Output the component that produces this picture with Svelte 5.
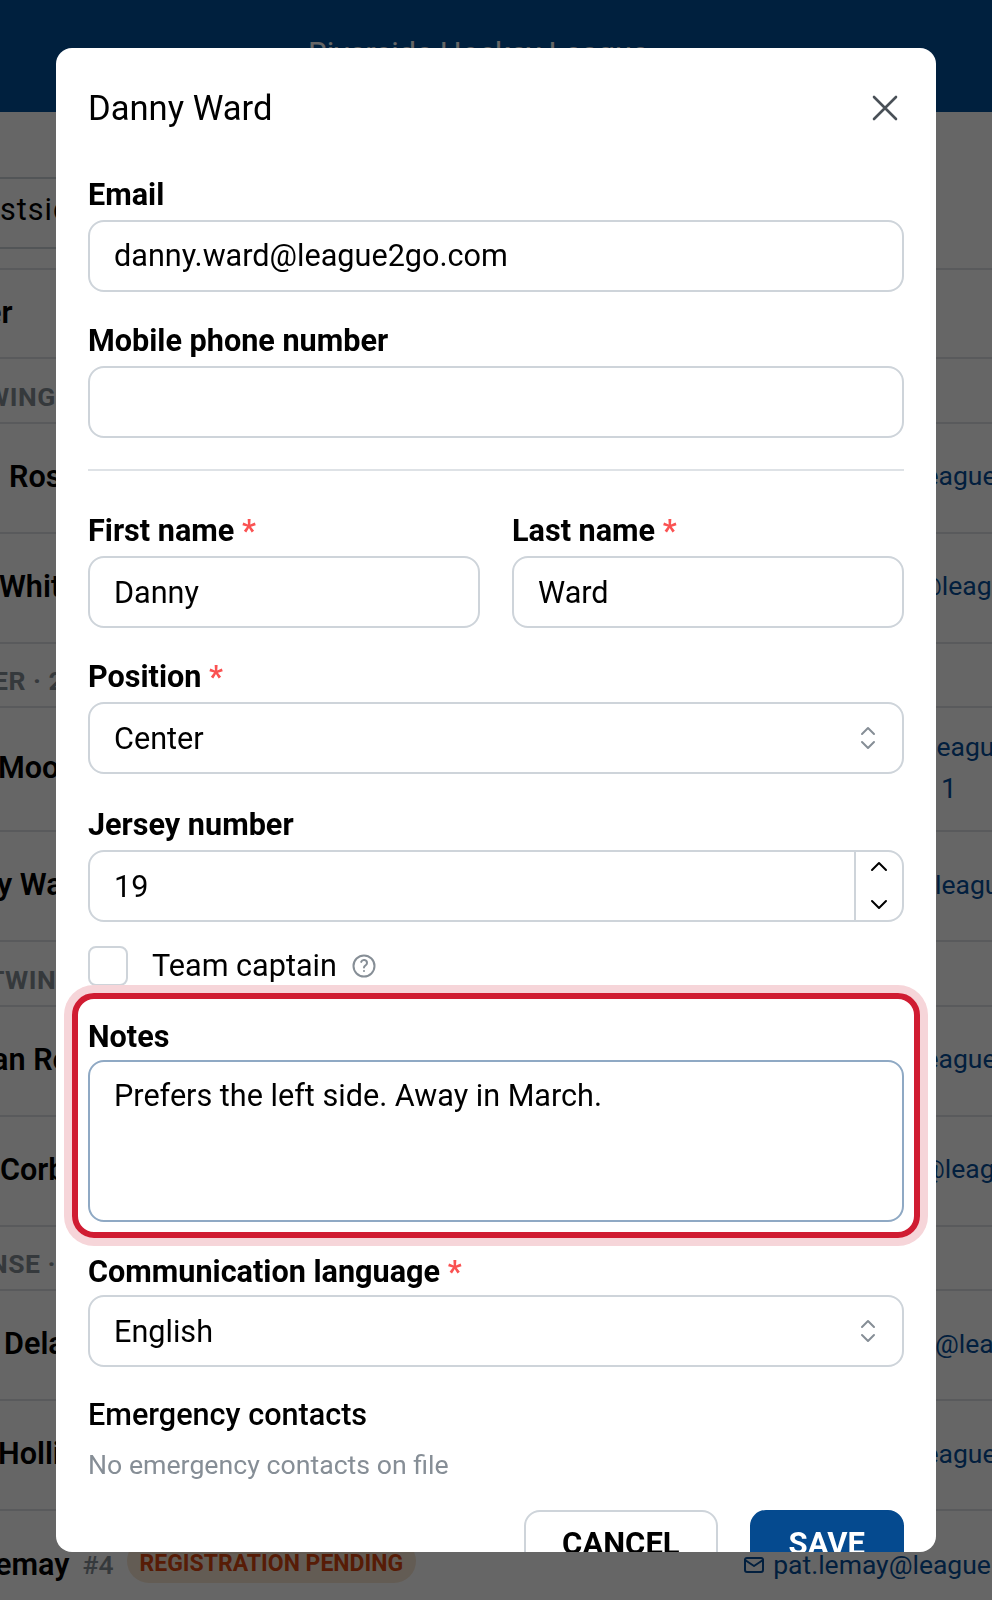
<script>
	let players = [
		{ type: 'row', name: 'er', nx: -15, h: 'short' },
		{ type: 'section', label: 'WINGS', nx: -14 },
		{ type: 'row', name: 'Ross', nx: 9, mail: 'league2go.com', mx: -18 },
		{ type: 'row', name: 'White', nx: -1, mail: '@league2go.com', mx: -18 },
		{ type: 'section', label: 'ER · 2', nx: -7 },
		{ type: 'row', name: 'Moore', nx: -2, mail: 'league2go.com', mx: -6, extra: '1', h: 'tall' },
		{ type: 'row', name: 'y Ward', nx: -3, mail: 'league2go.com', mx: -1 },
		{ type: 'section', label: 'TWINS', nx: -12 },
		{ type: 'row', name: 'an Reid', nx: -8, mail: 'league2go.com', mx: -18 },
		{ type: 'row', name: 'Corbin', nx: 0, mail: '@league2go.com', mx: -15 },
		{ type: 'section', label: 'NSE ·', nx: -11 },
		{ type: 'row', name: 'Delaney', nx: 4, mail: '@league2go.com', mx: -1 },
		{ type: 'row', name: 'Hollis', nx: -2, mail: 'league2go.com', mx: -18 }
	];

	let form = {
		email: 'danny.ward@league2go.com',
		phone: '',
		first: 'Danny',
		last: 'Ward',
		position: 'Center',
		jersey: '19',
		captain: false,
		notes: 'Prefers the left side. Away in March.',
		language: 'English'
	};
</script>

<div class="page">
	<header class="topbar"><span>Riverside Hockey League</span></header>

	<div class="filter"><span>Eastside</span></div>

	<ul class="roster">
		{#each players as p}
			{#if p.type === 'section'}
				<li class="section"><span style="margin-left:{p.nx}px">{p.label}</span></li>
			{:else}
				<li class="player" class:short={p.h === 'short'} class:tall={p.h === 'tall'}>
					<span class="name" style="margin-left:{p.nx}px">{p.name}</span>
					{#if p.mail}
						<div class="contact" style="margin-right:{-p.mx}px">
							<span>{p.mail}</span>
							{#if p.extra}<span class="extra">{p.extra}</span>{/if}
						</div>
					{/if}
				</li>
			{/if}
		{/each}
		<li class="player last">
			<span class="name">emay</span>
			<span class="num">#4</span>
			<span class="badge">REGISTRATION PENDING</span>
			<span class="mail">
				<svg width="24" height="24" viewBox="0 0 24 24" fill="none" stroke="currentColor" stroke-width="2" stroke-linecap="round" stroke-linejoin="round">
					<rect x="3" y="5" width="18" height="14" rx="2" />
					<path d="M3 7l9 6 9-6" />
				</svg>
				pat.lemay@league2go.com
			</span>
		</li>
	</ul>
</div>

<div class="overlay"></div>

<div class="modal">
	<div class="modal-head">
		<h2>Danny Ward</h2>
		<button class="close" aria-label="Close">
			<svg width="26" height="26" viewBox="0 0 26 26" fill="none" stroke="currentColor" stroke-width="2.6" stroke-linecap="round">
				<path d="M2 2l22 22M24 2L2 24" />
			</svg>
		</button>
	</div>

	<div class="field">
		<label for="email">Email</label>
		<input id="email" class="control" value={form.email} />
	</div>

	<div class="field">
		<label for="phone">Mobile phone number</label>
		<input id="phone" class="control" value={form.phone} />
	</div>

	<hr />

	<div class="two">
		<div class="field">
			<label for="first">First name <i>*</i></label>
			<input id="first" class="control" value={form.first} />
		</div>
		<div class="field">
			<label for="last">Last name <i>*</i></label>
			<input id="last" class="control" value={form.last} />
		</div>
	</div>

	<div class="field">
		<label for="pos">Position <i>*</i></label>
		<div class="wrap">
			<select id="pos" class="control">
				<option>{form.position}</option>
			</select>
			<svg class="updown" width="16" height="24" viewBox="0 0 16 24" fill="none" stroke="currentColor" stroke-width="2" stroke-linecap="round" stroke-linejoin="round">
				<path d="M2 8l6-6 6 6M2 16l6 6 6-6" />
			</svg>
		</div>
	</div>

	<div class="field jersey">
		<label for="jersey">Jersey number</label>
		<div class="wrap">
			<input id="jersey" class="control" value={form.jersey} />
			<div class="steppers">
				<button class="up" aria-label="Up">
					<svg width="20" height="12" viewBox="0 0 20 12" fill="none" stroke="currentColor" stroke-width="2" stroke-linecap="round" stroke-linejoin="round"><path d="M3 10l7-7 7 7" /></svg>
				</button>
				<button class="down" aria-label="Down">
					<svg width="20" height="12" viewBox="0 0 20 12" fill="none" stroke="currentColor" stroke-width="2" stroke-linecap="round" stroke-linejoin="round"><path d="M3 2l7 7 7-7" /></svg>
				</button>
			</div>
		</div>
	</div>

	<div class="check">
		<input id="captain" type="checkbox" bind:checked={form.captain} />
		<label for="captain">Team captain</label>
		<svg width="24" height="24" viewBox="0 0 24 24" fill="none" stroke="#868e96" stroke-width="2" stroke-linecap="round" stroke-linejoin="round">
			<circle cx="12" cy="12" r="10.5" />
			<path d="M12 17v.01M12 13.5c0-2 3-2 3-4.6a3 3 0 0 0-5.8-1" />
		</svg>
	</div>

	<div class="field notes">
		<label for="notes">Notes</label>
		<textarea id="notes" class="control" value={form.notes}></textarea>
	</div>

	<div class="field lang">
		<label for="lang">Communication language <i>*</i></label>
		<div class="wrap">
			<select id="lang" class="control">
				<option>{form.language}</option>
			</select>
			<svg class="updown" width="16" height="24" viewBox="0 0 16 24" fill="none" stroke="currentColor" stroke-width="2" stroke-linecap="round" stroke-linejoin="round">
				<path d="M2 8l6-6 6 6M2 16l6 6 6-6" />
			</svg>
		</div>
	</div>

	<h3>Emergency contacts</h3>
	<p class="empty">No emergency contacts on file</p>

	<div class="actions">
		<button class="btn cancel">CANCEL</button>
		<button class="btn save">SAVE</button>
	</div>
</div>

<style>
	:global(body) {
		font-family: Roboto, sans-serif;
		background: #fff;
		color: #000;
	}
	.page {
		height: 1600px;
		overflow: hidden;
		font-size: 30.6px;
	}
	.topbar {
		height: 112px;
		background: #02509b;
		color: #fff;
		display: flex;
		justify-content: center;
		padding: 36px 36px 0 0;
		box-sizing: border-box;
		font-size: 30.6px;
	}
	.filter {
		margin-top: 65px;
		height: 72px;
		box-sizing: border-box;
		border-top: 2px solid #ced4da;
		border-bottom: 2px solid #ced4da;
		width: 300px;
		display: flex;
		align-items: center;
		margin-left: -36px;
		padding-bottom: 8px;
		letter-spacing: 1px;
	}
	.roster {
		list-style: none;
		margin: 19px 0 0;
		padding: 0;
	}
	.roster li {
		box-sizing: border-box;
		border-top: 2px solid #dee2e6;
		display: flex;
	}
	.section {
		height: 64.5px;
		padding-top: 20.5px;
		color: #868e96;
		font-weight: 700;
		font-size: 26.5px;
		line-height: 34px;
		letter-spacing: 0.5px;
	}
	.player {
		height: 110px;
		padding-bottom: 3px;
		align-items: center;
		justify-content: space-between;
	}
	.player.short {
		height: 89px;
	}
	.player.tall {
		height: 124px;
	}
	.name {
		font-weight: 600;
		white-space: nowrap;
	}
	.contact {
		width: 56px;
		flex: none;
		display: flex;
		flex-direction: column;
		gap: 6px;
		color: #054f9b;
		font-size: 26.5px;
		white-space: nowrap;
		line-height: 36px;
	}
	.extra {
		padding-left: 11px;
		font-size: 28px;
	}
	.player.last {
		justify-content: flex-start;
		padding-bottom: 1px;
		position: relative;
	}
	.last .name {
		margin-left: -5px;
	}
	.num {
		color: #868e96;
		margin-left: 13px;
		font-size: 26.5px;
		font-weight: 500;
		white-space: nowrap;
	}
	.badge {
		margin: 0 0 8px 13px;
		background: #f8e6d2;
		color: #d9480f;
		font-weight: 700;
		font-size: 23px;
		line-height: 38px;
		padding: 6px 13px 0;
		border-radius: 22px;
		white-space: nowrap;
	}
	.mail {
		margin-left: auto;
		margin-right: -103px;
		display: flex;
		align-items: center;
		gap: 7px;
		color: #054f9b;
		font-size: 26.5px;
		white-space: nowrap;
	}
	.overlay {
		position: fixed;
		inset: 0;
		background: rgba(0, 0, 0, 0.6);
	}
	.modal {
		position: fixed;
		top: 48px;
		left: 56px;
		width: 880px;
		height: 1504px;
		box-sizing: border-box;
		background: #fff;
		border-radius: 16px;
		padding: 0 32px;
		overflow: hidden;
	}
	.modal-head {
		display: flex;
		justify-content: space-between;
		align-items: center;
		height: 120px;
		margin-bottom: 4.5px;
	}
	h2 {
		margin: 0;
		font-size: 34.6px;
		font-weight: 400;
	}
	.close {
		border: 0;
		background: none;
		padding: 0;
		color: #495057;
		display: flex;
		margin-right: 6px;
	}
	.field {
		margin-bottom: 27px;
	}
	.jersey {
		padding-top: 2px;
	}
	label {
		display: block;
		font-size: 30.6px;
		font-weight: 700;
		line-height: 44px;
		margin-bottom: 3px;
	}
	.notes label,
	.lang label {
		padding-top: 2px;
		margin-bottom: 1px;
	}
	label i {
		color: #fa5252;
		font-style: normal;
		font-weight: 700;
	}
	.control {
		display: block;
		width: 100%;
		height: 72px;
		box-sizing: border-box;
		border: 2px solid #ced4da;
		border-radius: 16px;
		padding: 0 24px;
		background: #fff;
		color: #000;
		font-family: inherit;
		font-size: 30.6px;
		appearance: none;
	}
	hr {
		border: 0;
		border-top: 2px solid #dee2e6;
		margin: 31px 0 38.5px;
	}
	.two {
		display: grid;
		grid-template-columns: 1fr 1fr;
		gap: 32px;
	}
	.wrap {
		position: relative;
	}
	.updown {
		position: absolute;
		right: 28px;
		top: 24px;
		color: #868e96;
	}
	.steppers {
		position: absolute;
		top: 2px;
		right: 2px;
		bottom: 2px;
		width: 46px;
		border-left: 2px solid #ced4da;
		display: flex;
		flex-direction: column;
		justify-content: space-between;
	}
	.steppers button {
		flex: 1;
		border: 0;
		background: none;
		padding: 0;
		color: #000;
		display: flex;
		align-items: center;
		justify-content: center;
	}
	.steppers .up {
		padding-bottom: 12px;
	}
	.steppers .down {
		padding-bottom: 2px;
	}
	.check {
		display: flex;
		align-items: center;
		height: 40px;
		margin-top: -3px;
	}
	.check input {
		appearance: none;
		width: 40px;
		height: 40px;
		margin: 0;
		border: 2px solid #ced4da;
		border-radius: 8px;
		background: #fff;
	}
	.check label {
		font-weight: 400;
		margin: 0 15px 0 24px;
	}
	.notes {
		position: relative;
		margin-top: 26.5px;
		margin-bottom: 26.5px;
	}
	.notes::after {
		content: '';
		position: absolute;
		top: -19.5px;
		bottom: -16.5px;
		left: -16px;
		right: -16px;
		border: 6px solid #d01c32;
		border-radius: 22px;
		box-shadow: 0 0 0 8px #f6d5d9;
		pointer-events: none;
	}
	textarea.control {
		height: 162px;
		padding-top: 12px;
		line-height: 44px;
		resize: none;
		border-color: #8fa9c4;
	}
	.lang {
		margin-bottom: 26px;
	}
	h3 {
		margin: 0;
		font-size: 30.6px;
		font-weight: 500;
		line-height: 44px;
	}
	.empty {
		margin: 6px 0 0;
		font-size: 26.7px;
		line-height: 44px;
		color: #868e96;
	}
	.actions {
		display: flex;
		justify-content: flex-end;
		gap: 32px;
		margin-top: 23px;
	}
	.btn {
		height: 72px;
		border-radius: 16px;
		padding: 0 36px 6px;
		font-family: inherit;
		font-size: 31px;
		font-weight: 700;
		box-sizing: border-box;
	}
	.cancel {
		background: #fff;
		border: 2px solid #ced4da;
		color: #000;
	}
	.save {
		background: #054a8f;
		border: 2px solid #054a8f;
		padding: 0 37px 6px;
		color: #fff;
	}
</style>
